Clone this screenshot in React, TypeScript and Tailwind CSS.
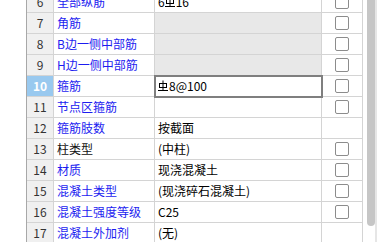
import React from "react";

const Rebar = () => (
  <svg width="10" height="12" viewBox="0 0 10 12" className="inline-block mr-[1px] align-[-1px]" fill="none" stroke="#000" strokeWidth="1">
    <rect x="1.5" y="3.5" width="7" height="4" />
    <path d="M5 0.5 V11" />
    <path d="M0 10.5 H10" />
  </svg>
);

type Row = {
  n: number;
  name: string;
  value?: React.ReactNode;
  blue: boolean;
  check: boolean;
  disabled?: boolean;
  active?: boolean;
};

const rows: Row[] = [
  { n: 6, name: "全部纵筋", value: <><span>6</span><Rebar /><span>16</span></>, blue: true, check: true },
  { n: 7, name: "角筋", blue: true, check: true, disabled: true },
  { n: 8, name: "B边一侧中部筋", blue: true, check: true, disabled: true },
  { n: 9, name: "H边一侧中部筋", blue: true, check: true, disabled: true },
  { n: 10, name: "箍筋", value: <><Rebar /><span>8@100</span></>, blue: true, check: true, active: true },
  { n: 11, name: "节点区箍筋", blue: true, check: true },
  { n: 12, name: "箍筋肢数", value: "按截面", blue: true, check: false },
  { n: 13, name: "柱类型", value: "(中柱)", blue: false, check: true },
  { n: 14, name: "材质", value: "现浇混凝土", blue: true, check: true },
  { n: 15, name: "混凝土类型", value: "(现浇碎石混凝土)", blue: true, check: true },
  { n: 16, name: "混凝土强度等级", value: "C25", blue: true, check: true },
  { n: 17, name: "混凝土外加剂", value: "(无)", blue: true, check: false },
];

export default function App() {
  return (
    <div
      className="relative w-[383px] h-[242px] overflow-hidden bg-white text-[12px] text-[#000]"
      style={{ fontFamily: '"Noto Sans CJK SC", "Noto Sans", sans-serif' }}
    >
      <div className="flex -mt-[8px]">
        <div className="w-[26px] shrink-0" />
        <div className="flex flex-col border-l border-[#a8a8a8]">
          {rows.map((r) => (
            <div key={r.n} className="flex h-[21px]">
              <div
                className={`w-[27px] shrink-0 flex items-center justify-center border-r border-b border-[#d4d4d4] ${
                  r.active ? "bg-[#99c9ef] font-bold text-white" : "bg-[#f0f0f0] text-[#333]"
                }`}
              >
                {r.n}
              </div>
              <div
                className={`w-[101px] shrink-0 flex items-center pl-[3px] border-r border-b border-[#d4d4d4] whitespace-nowrap ${
                  r.blue ? "text-[#1c1cf0]" : "text-[#111]"
                }`}
              >
                {r.name}
              </div>
              <div
                className={`w-[167px] shrink-0 flex items-center pl-[3px] border-r border-b border-[#d4d4d4] whitespace-nowrap ${
                  r.disabled ? "bg-[#e8e8e8]" : "bg-white"
                } ${r.active ? "outline-2 -outline-offset-1 outline-[#7f7f7f] relative" : ""}`}
              >
                {r.value}
              </div>
              <div className="w-[41px] shrink-0 flex items-center justify-center border-r border-b border-[#d4d4d4]">
                {r.check && (
                  <div className="w-[14px] h-[14px] rounded-[2px] border border-[#8c8c8c] bg-white" />
                )}
              </div>
            </div>
          ))}
        </div>
      </div>
      <div className="absolute top-0 right-0 w-[20px] h-[242px] bg-white flex pl-[4px]">
        <div className="w-[8px] h-[226px] rounded-b-[4px] bg-[#c6c6c6]" />
        <div className="w-[2px] h-[242px] bg-[#e6e6e6]" />
      </div>
    </div>
  );
}
